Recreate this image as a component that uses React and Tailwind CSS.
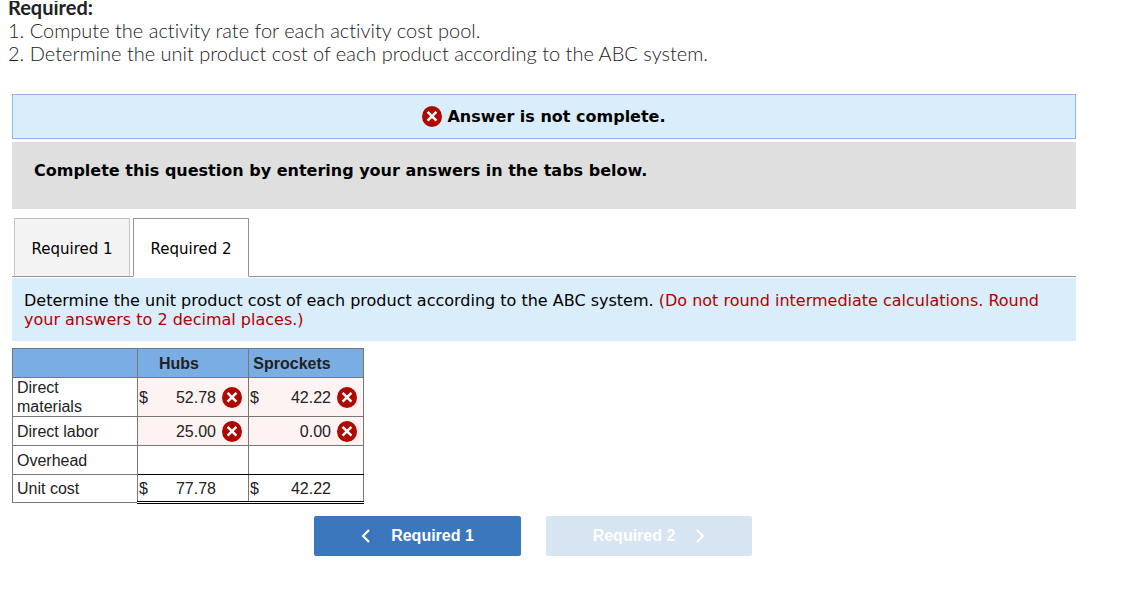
import React, { useState } from 'react';

const WrongIcon = () => (
  <svg width="20" height="21" viewBox="0 0 20 21" className="shrink-0" role="img" aria-label="Incorrect">
    <ellipse cx="10" cy="10.5" rx="10" ry="10.5" fill="#ad0900" />
    <path d="M5.6 5.8l8.8 8.8M14.4 5.8l-8.8 8.8" stroke="#fff" strokeWidth="2.5" fill="none" />
  </svg>
);

const ChevronLeft = () => (
  <svg width="10" height="14" viewBox="0 0 10 14" aria-hidden="true">
    <path d="M8 1L2 7l6 6" stroke="currentColor" strokeWidth="2.2" fill="none" />
  </svg>
);

const ChevronRight = () => (
  <svg width="10" height="14" viewBox="0 0 10 14" aria-hidden="true">
    <path d="M2 1l6 6-6 6" stroke="currentColor" strokeWidth="2.2" fill="none" />
  </svg>
);

const rows = [
  {
    label: 'Direct materials',
    height: 'h-[39px]',
    cells: [
      { sign: '$', value: '52.78', wrong: true },
      { sign: '$', value: '42.22', wrong: true },
    ],
  },
  {
    label: 'Direct labor',
    height: 'h-[29px]',
    cells: [
      { value: '25.00', wrong: true },
      { value: '0.00', wrong: true },
    ],
  },
  { label: 'Overhead', height: 'h-[29px]', edge: 'border-b-black', cells: [{}, {}] },
  {
    label: 'Unit cost',
    height: 'h-7',
    edge: 'border-t-black border-b-3 border-b-black [border-bottom-style:double]',
    cells: [
      { sign: '$', value: '77.78' },
      { sign: '$', value: '42.22' },
    ],
  },
];

const AmountCell = ({ cell, edge }) => (
  <td className={`border border-[#777] p-0 ${cell.wrong ? 'bg-[#fdf3f3]' : 'bg-white'} ${edge || ''}`}>
    <div className="flex items-center pl-px pr-1.5">
      <span>{cell.sign}</span>
      <span className="ml-auto mr-1.5">{cell.value}</span>
      {cell.wrong ? <WrongIcon /> : <span className="w-5" />}
    </div>
  </td>
);

const CostTable = () => (
  <table className="mt-[7px] w-[352px] table-fixed border-collapse font-['Liberation_Sans',sans-serif] text-base leading-[19px] text-[#222]">
    <colgroup>
      <col className="w-[125px]" />
      <col className="w-[111px]" />
      <col className="w-[115px]" />
    </colgroup>
    <thead>
      <tr className="h-[29px] bg-[#7aade4]">
        <td className="border border-[#777] p-0"></td>
        <th scope="col" className="border border-[#777] p-0 pr-7">Hubs</th>
        <th scope="col" className="border border-[#777] p-0 pr-7">Sprockets</th>
      </tr>
    </thead>
    <tbody>
      {rows.map((row) => (
        <tr key={row.label} className={row.height}>
          <th scope="row" className="border border-[#777] p-0 pl-1 pr-6 text-left font-normal">
            {row.label}
          </th>
          {row.cells.map((cell, i) => (
            <AmountCell key={i} cell={cell} edge={row.edge} />
          ))}
        </tr>
      ))}
    </tbody>
  </table>
);

const tabBase = 'h-[59px] w-[116px] border pt-[3px] text-[15px] text-black';

const App = () => {
  const [tab, setTab] = useState(2);

  const tabClass = (n) =>
    tab === n
      ? `${tabBase} border-[#949494] border-b-white bg-white`
      : `${tabBase} border-[#c4c4c4] border-b-[#949494] bg-[#f3f3f3]`;

  return (
    <div className="bg-white pt-px font-['DejaVu_Sans',sans-serif] text-black">
      <div className="overflow-hidden px-2 font-['Lato',sans-serif] text-xl leading-[23px] text-[#222] [font-variant-ligatures:none]">
        <div className="-mt-[5px] font-light">
          <p className="font-bold">Required:</p>
          <p>1. Compute the activity rate for each activity cost pool.</p>
          <p>2. Determine the unit product cost of each product according to the ABC system.</p>
        </div>
      </div>

      <div className="mt-[29px] pl-3 pr-[46px]">
        <div className="flex h-[45px] items-center justify-center gap-[5px] border border-[#8fb8e0] bg-[#daedfb] text-base font-bold">
          <WrongIcon />
          <span>Answer is not complete.</span>
        </div>

        <div className="mt-[3px] h-[67px] bg-[#dfdfdf] px-[22px] pt-[17px] text-base font-bold">
          Complete this question by entering your answers in the tabs below.
        </div>

        <div role="tablist" className="mt-[9px] flex gap-[3px] border-b border-[#949494] pl-0.5">
          <button type="button" role="tab" aria-selected={tab === 1} className={`-mb-px ${tabClass(1)}`} onClick={() => setTab(1)}>
            Required 1
          </button>
          <button type="button" role="tab" aria-selected={tab === 2} className={`-mb-px ${tabClass(2)}`} onClick={() => setTab(2)}>
            Required 2
          </button>
        </div>

        <p className="mt-px min-h-[63px] bg-[#daedfb] px-3 pt-[13px] text-base leading-[19px]">
          Determine the unit product cost of each product according to the ABC system.{' '}
          <span className="text-[#b00000]">
            (Do not round intermediate calculations. Round your answers to 2 decimal places.)
          </span>
        </p>

        <CostTable />

        <div className="mt-3 flex justify-center gap-[25px] pr-[22px] font-['Liberation_Sans',sans-serif] text-base font-bold text-white">
          <button
            type="button"
            className="flex h-10 w-[207px] items-center justify-center gap-5 rounded-xs bg-[#3b77bc]"
            onClick={() => setTab(1)}
          >
            <ChevronLeft />
            Required 1
          </button>
          <button
            type="button"
            disabled
            className="flex h-10 w-[206px] items-center justify-center gap-5 rounded-xs bg-[#d7e4f2]"
          >
            Required 2
            <ChevronRight />
          </button>
        </div>
      </div>
    </div>
  );
};

export default App;
